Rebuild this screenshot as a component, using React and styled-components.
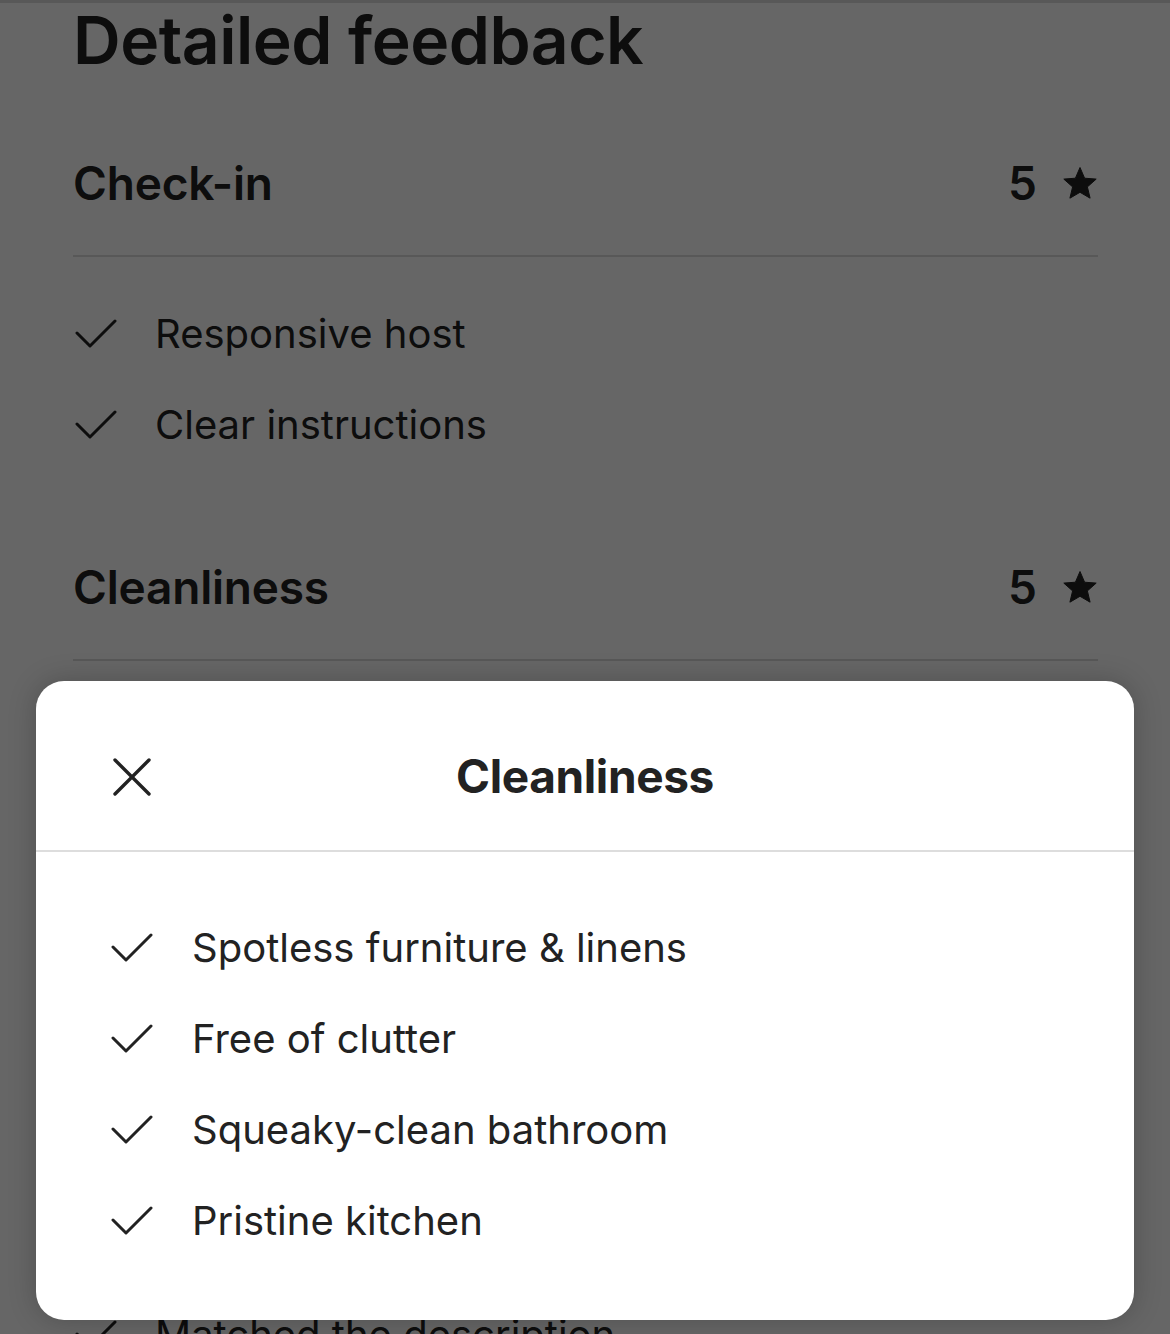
import styled, { createGlobalStyle } from "styled-components";

const GlobalStyle = createGlobalStyle`
  html, body {
    margin: 0;
    padding: 0;
    background: #ffffff;
    font-family: Inter, "Noto Sans", "Liberation Sans", sans-serif;
    color: #222222;
  }
  * {
    box-sizing: border-box;
  }
`;

const Screen = styled.div`
  position: relative;
  width: 1170px;
  height: 1334px;
  overflow: hidden;
  background: #ffffff;
`;

const TopLine = styled.div`
  height: 3px;
  background: #dddddd;
`;

const Page = styled.main`
  padding: 0 72px 0 73px;
`;

const PageTitle = styled.h1`
  margin: -2px 0 31px;
  font-size: 66px;
  line-height: 79px;
  font-weight: 600;
  letter-spacing: -0.5px;
`;

const Section = styled.section`
  margin-bottom: ${(p) => p.$gap}px;
`;

const SectionHeader = styled.div`
  height: 146px;
  display: flex;
  align-items: center;
  justify-content: space-between;
  border-bottom: 2px solid #dddddd;
`;

const SectionName = styled.h2`
  margin: 0;
  font-size: 46px;
  font-weight: 600;
  letter-spacing: -0.2px;
`;

const Score = styled.div`
  display: flex;
  align-items: center;
  gap: 25px;
  font-size: 46px;
  font-weight: 600;
`;

const List = styled.ul`
  list-style: none;
  margin: 0;
  padding: ${(p) => p.$top}px 0 0 ${(p) => p.$left}px;
`;

const Item = styled.li`
  height: 91px;
  display: flex;
  align-items: center;
  gap: ${(p) => p.$gap}px;
  font-size: 40px;
  font-weight: 400;
  color: #222222;
`;

const Overlay = styled.div`
  position: absolute;
  inset: 0;
  background: rgba(0, 0, 0, 0.6);
`;

const Modal = styled.div`
  position: absolute;
  left: 36px;
  top: 681px;
  width: 1098px;
  height: 639px;
  background: #ffffff;
  border-radius: 28px;
  box-shadow: 0 0 28px rgba(0, 0, 0, 0.22);
  overflow: hidden;
`;

const ModalHeader = styled.header`
  position: relative;
  height: 171px;
  padding-top: 20px;
  display: flex;
  align-items: center;
  justify-content: center;
  border-bottom: 2px solid #dddddd;
`;

const CloseButton = styled.button`
  position: absolute;
  left: 72px;
  top: 72px;
  width: 48px;
  height: 48px;
  padding: 0;
  border: none;
  background: none;
  display: flex;
  align-items: center;
  justify-content: center;
  cursor: pointer;
`;

const ModalTitle = styled.h2`
  margin: 0;
  font-size: 46px;
  font-weight: 700;
  letter-spacing: -0.4px;
`;

const ModalBody = styled.div`
  padding: 0 40px 0 75px;
`;

const Check = () => (
  <svg width="42" height="30" viewBox="0 0 42 30" fill="none">
    <path d="M2 14 L15 27 L40 2" stroke="#222222" strokeWidth="3" strokeLinecap="round" strokeLinejoin="round" />
  </svg>
);

const Star = () => (
  <svg width="36" height="34" viewBox="0 0 36 34">
    <path
      d="M18 1.5 L22.6 12.2 L34.2 13.1 L25.4 20.9 L28.1 32.2 L18 26.3 L7.9 32.2 L10.6 20.9 L1.8 13.1 L13.4 12.2 Z"
      fill="#222222"
      stroke="#222222"
      strokeWidth="1"
      strokeLinejoin="round"
    />
  </svg>
);

const CloseIcon = () => (
  <svg width="38" height="38" viewBox="0 0 38 38" fill="none">
    <path d="M2 2 L36 36 M36 2 L2 36" stroke="#222222" strokeWidth="3.4" strokeLinecap="round" />
  </svg>
);

const sections = [
  { name: "Check-in", score: 5, gap: 45, items: ["Responsive host", "Clear instructions"] },
  {
    name: "Cleanliness",
    score: 5,
    gap: 56,
    items: ["Spotless furniture & linens", "Free of clutter", "Squeaky-clean bathroom", "Pristine kitchen"],
  },
  { name: "Accuracy", score: 5, gap: 45, items: ["Matched the description", "Matched the photos"] },
];

const modalItems = sections[1].items;

export default function App() {
  return (
    <Screen>
      <GlobalStyle />
      <TopLine />
      <Page>
        <PageTitle>Detailed feedback</PageTitle>
        {sections.map((s) => (
          <Section key={s.name} $gap={s.gap}>
            <SectionHeader>
              <SectionName>{s.name}</SectionName>
              <Score>
                {s.score}
                <Star />
              </Score>
            </SectionHeader>
            <List $top={31} $left={2}>
              {s.items.map((it) => (
                <Item key={it} $gap={38}>
                  <Check />
                  {it}
                </Item>
              ))}
            </List>
          </Section>
        ))}
      </Page>
      <Overlay />
      <Modal>
        <ModalHeader>
          <CloseButton aria-label="Close">
            <CloseIcon />
          </CloseButton>
          <ModalTitle>Cleanliness</ModalTitle>
        </ModalHeader>
        <ModalBody>
          <List $top={50} $left={0}>
            {modalItems.map((it) => (
              <Item key={it} $gap={39}>
                <Check />
                {it}
              </Item>
            ))}
          </List>
        </ModalBody>
      </Modal>
    </Screen>
  );
}
